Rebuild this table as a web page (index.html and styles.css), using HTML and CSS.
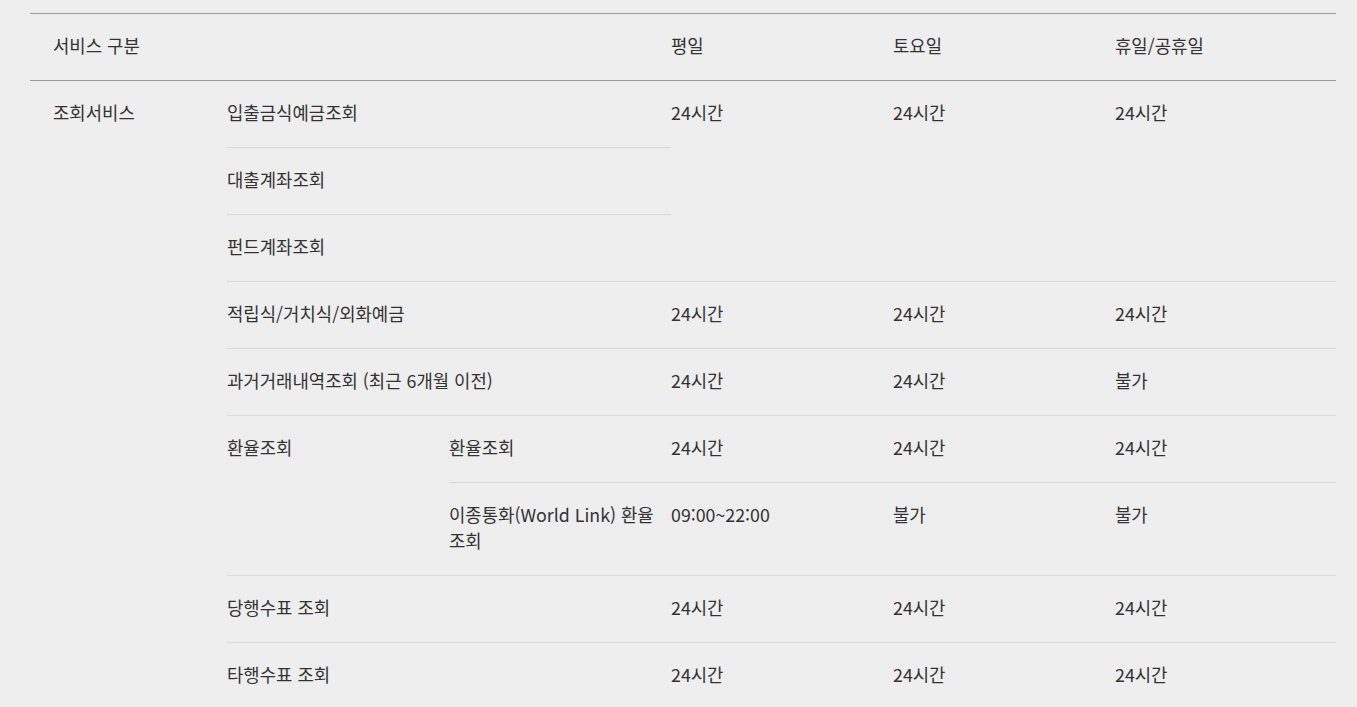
FILE: index.html
```html
<!DOCTYPE html>
<html lang="ko">
<head>
<meta charset="utf-8">
<title>조회서비스 이용시간</title>
<link rel="stylesheet" href="styles.css">
</head>
<body>
<div class="wrap">
<table class="svc">
  <colgroup>
    <col class="w1"><col class="w2"><col class="w2"><col class="w2"><col class="w2"><col class="w3">
  </colgroup>
  <thead>
    <tr>
      <th colspan="3" class="first">서비스 구분</th>
      <th>평일</th>
      <th>토요일</th>
      <th>휴일/공휴일</th>
    </tr>
  </thead>
  <tbody>
    <tr>
      <td rowspan="9" class="first nob">조회서비스</td>
      <td colspan="2">입출금식예금조회</td>
      <td rowspan="3">24시간</td>
      <td rowspan="3">24시간</td>
      <td rowspan="3">24시간</td>
    </tr>
    <tr><td colspan="2">대출계좌조회</td></tr>
    <tr><td colspan="2">펀드계좌조회</td></tr>
    <tr>
      <td colspan="2">적립식/거치식/외화예금</td>
      <td>24시간</td><td>24시간</td><td>24시간</td>
    </tr>
    <tr>
      <td colspan="2">과거거래내역조회 (최근 6개월 이전)</td>
      <td>24시간</td><td>24시간</td><td>불가</td>
    </tr>
    <tr>
      <td rowspan="2">환율조회</td>
      <td>환율조회</td>
      <td>24시간</td><td>24시간</td><td>24시간</td>
    </tr>
    <tr>
      <td>이종통화(World Link) 환율 조회</td>
      <td>09:00~22:00</td><td>불가</td><td>불가</td>
    </tr>
    <tr>
      <td colspan="2">당행수표 조회</td>
      <td>24시간</td><td>24시간</td><td>24시간</td>
    </tr>
    <tr>
      <td colspan="2">타행수표 조회</td>
      <td>24시간</td><td>24시간</td><td>24시간</td>
    </tr>
  </tbody>
</table>
</div>
</body>
</html>
```
FILE: styles.css
```css
html, body {
  margin: 0;
  padding: 0;
  background: #eeeeee;
}
body {
  font-family: "Noto Sans CJK KR", "Noto Sans", sans-serif;
  font-size: 17.8px;
  color: #333333;
}
.wrap {
  padding: 13px 21px 0 30px;
}
.svc {
  width: 1306px;
  table-layout: fixed;
  border-collapse: collapse;
  border-spacing: 0;
}
.w1 { width: 197px; }
.w2 { width: 222px; }
.w3 { width: 221px; }
.svc th,
.svc td {
  padding: 18px 10px 22px 0;
  line-height: 26px;
  text-align: left;
  vertical-align: top;
  font-weight: 400;
  word-break: keep-all;
  border-bottom: 1px solid #d9d9d9;
}
.svc thead th {
  border-top: 1px solid #9a9a9a;
  border-bottom: 1px solid #9a9a9a;
}
.svc .first {
  padding-left: 23px;
}
.svc td.nob {
  border-bottom: none;
}
```
